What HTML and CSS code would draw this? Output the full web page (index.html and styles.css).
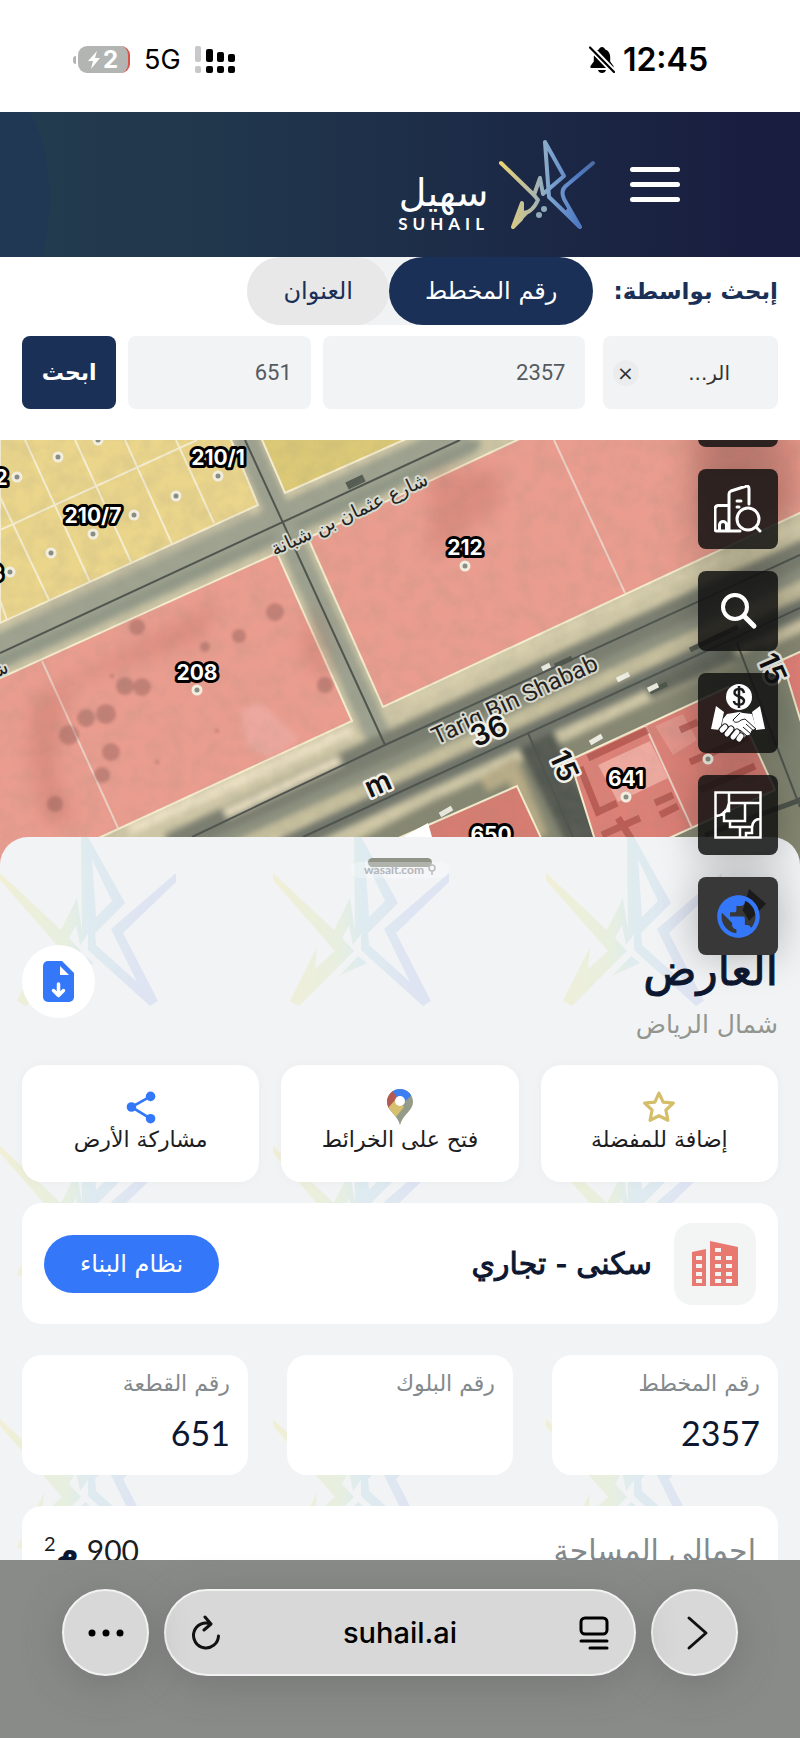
FILE: index.html
```html
<!DOCTYPE html>
<html lang="ar" dir="rtl">
<head>
<meta charset="utf-8">
<meta name="viewport" content="width=device-width, initial-scale=1">
<title>سهيل</title>
<link rel="stylesheet" href="styles.css">
</head>
<body>
<div class="status-bar">
  <div class="status-group">
    <span class="clock">12:45</span>
    <svg class="bell" viewBox="0 0 26 27" aria-hidden="true">
      <path d="M13 1c1.600 0 2.600 1 2.900 2.200 3.600 1.200 5.300 4.200 5.300 7.800v4.500l3.300 4.500v2H1.500v-2l3.300-4.500V11c0-3.600 1.700-6.600 5.300-7.800C10.400 2 11.400 1 13 1zM9 24h8c-.5 2-2 3-4 3s-3.500-1-4-3z" fill="#000"/>
      <path d="M1 1l24 25" stroke="#fff" stroke-width="6"/>
      <path d="M1 1.500l24 24.500" stroke="#000" stroke-width="2.200" stroke-linecap="round"/>
    </svg>
  </div>
  <div class="status-group status-left">
    <svg class="signal" viewBox="0 0 40 28" aria-hidden="true">
      <g fill="#c8c8cb"><rect x="0" y="0" width="6" height="16" rx="2"/><rect x="0" y="20" width="6" height="7" rx="2"/></g>
      <rect x="11" y="3" width="7" height="13" rx="2"/><rect x="22" y="6" width="7" height="10" rx="2"/><rect x="33" y="8" width="7" height="8" rx="2"/>
      <rect x="11" y="20" width="7" height="7" rx="2"/><rect x="22" y="20" width="7" height="7" rx="2"/><rect x="33" y="20" width="7" height="7" rx="2"/>
    </svg>
    <span class="network">5G</span>
    <span class="battery" dir="ltr">
      <svg viewBox="0 0 12 18" aria-hidden="true"><path d="M9 0L0 10h5L3 18l9-11H7z" fill="#fff"/></svg>2
    </span>
  </div>
</div>

<header class="site-header">
  <button class="menu-button" type="button" aria-label="القائمة"><span></span><span></span><span></span></button>
  <a class="brand" href="#">
    <svg class="brand-star" viewBox="0 0 98 96" aria-hidden="true">
      <defs><linearGradient id="logo" gradientUnits="userSpaceOnUse" x1="0" y1="50" x2="98" y2="50"><stop offset="0" stop-color="#f0d670"/><stop offset=".35" stop-color="#b4b9a6"/><stop offset=".52" stop-color="#7fa6d0"/><stop offset=".82" stop-color="#4f7ac4"/><stop offset="1" stop-color="#4b6a9a"/></linearGradient></defs>
      <g fill="none" stroke="url(#logo)" stroke-width="4" stroke-linecap="round" stroke-linejoin="round">
        <path d="M3 26L36 58 42 41 45 57 66 39 47 5 51 60 82 90 66 62Q62 53 69 48L95 26"/>
        <path d="M36 58L40 63Q34 76 25 76L23 82 15 90 24 66 24 76"/>
      </g>
      <path d="M71 69l13 21-4 1-14-15zM24 74l8 1-16 16-2-2z" fill="url(#logo)"/>
      <circle cx="41" cy="78" r="3" fill="#8faab8"/><circle cx="46" cy="72" r="3" fill="#8faab8"/>
    </svg>
    <span class="wordmark"><span class="wordmark-ar">سهيل</span><span class="wordmark-en" dir="ltr">SUHAIL</span></span>
  </a>
</header>

<form class="search-panel">
  <div class="search-mode">
    <span class="mode-label">إبحث بواسطة:</span>
    <div class="mode-switch">
      <button type="button" class="mode mode-on">رقم المخطط</button>
      <button type="button" class="mode">العنوان</button>
    </div>
  </div>
  <div class="search-fields">
    <div class="city">
      <span>الر...</span>
      <button type="button" class="clear" aria-label="مسح">×</button>
    </div>
    <input class="field" type="text" value="2357" aria-label="رقم المخطط">
    <input class="field" type="text" value="651" aria-label="رقم القطعة">
    <button class="submit" type="button">ابحث</button>
  </div>
</form>

<main class="stage">
  <svg class="map" viewBox="0 0 800 440" preserveAspectRatio="xMidYMin slice" direction="ltr" role="img" aria-label="خريطة الأراضي">
    <defs>
      <filter id="grain" x="0" y="0" width="100%" height="100%"><feTurbulence type="fractalNoise" baseFrequency=".06" numOctaves="4" seed="8"/><feColorMatrix values="0 0 0 0 .25  0 0 0 0 .25  0 0 0 0 .2  .9 0 0 0 -.3"/></filter>
      <filter id="soft"><feGaussianBlur stdDeviation="3"/></filter>
      <filter id="edge"><feGaussianBlur stdDeviation="1.500"/></filter>
      <filter id="wide"><feGaussianBlur stdDeviation="9"/></filter>
    </defs>
    <rect width="800" height="440" fill="#cfc7a6"/>
    <g fill="none">
      <g filter="url(#soft)">
        <path d="M-10 216L470-4" stroke="#9fa390" stroke-width="36"/>
        <path d="M-10 226L480 2" stroke="#8f9685" stroke-width="8"/>
        <path d="M243-6L382 305" stroke="#9da18f" stroke-width="25"/>
        <path d="M170 407L385 307 810 111" stroke="#7a7e70" stroke-width="27"/>
        <path d="M180 419L400 320 810 130" stroke="#8d917f" stroke-width="12"/>
        <path d="M190 428L400 334 810 146" stroke="#c6bf9d" stroke-width="11"/>
        <path d="M283 407L400 352 810 164" stroke="#70756a" stroke-width="19"/>
        <path d="M320 420L430 362 535 315 810 188 810 440z" fill="#858772"/>
        <path d="M536 300L590 410" stroke="#535951" stroke-width="38"/>
        <path d="M748 210L830 400" stroke="#7f8471" stroke-width="32"/>
        <path d="M484 345L512 329 540 397" stroke="#b8ac87" stroke-width="16"/>
        <path d="M648 252L735 213" stroke="#666b5f" stroke-width="15"/>
        <path d="M130 390L352 290" stroke="#ebe0c2" stroke-width="11"/>
        <path d="M225 374L340 320" stroke="#ebe0c2" stroke-width="9"/>
        <path d="M30 176L250 73" stroke="#bbb79e" stroke-width="7"/>
        <path d="M410 258L800 84" stroke="#d8d0ae" stroke-width="9"/>
      </g>
      <path d="M690 210L738 187M555 226L572 218M650 252l17-8M705 395L800 360" stroke="#4e554b" stroke-width="5"/>
      <path d="M347 46l17-8" stroke="#555c52" stroke-width="8"/>
      <g stroke="#eeeee5" stroke-width="5"><path d="M617 240l12-6M648 250l10-5M440 375l12-7M590 303l12-7M542 229l8-4"/></g>
    </g>
    <g stroke="#f5edcf" stroke-width="2">
      <path fill="#ead58b" d="M0-5H229L258 65 0 183z"/><path fill="#dcc977" d="M260-5L285 53 415-5z"/>
      <g fill="#ea9d8f"><path d="M-4 240L277 113 352 281 90 402-4 445z"/><path d="M308 98L528-5H804V71L383 267z"/></g>
      <path fill="#dd8177" d="M570 320L728 247 775 350 665 400H595z"/>
      <path fill="#e27f77" d="M782 220L804 210V292z"/><path fill="#d77d72" d="M385 404L517 346 542 400z"/>
      <g fill="none"><path d="M0 90L197 0M25 0L90 142M75 0L131 122M125 0L172 104M176 0L214 83M0 57L49 160M0 160L7 180"/><path stroke="#eed0c4" d="M42 221L118 388M554 0L625 153M645 285L692 388"/></g>
    </g>
    <g fill="#b46259" opacity=".28">
      <g filter="url(#wide)"><path d="M32 260L220 160 200 200 70 245 55 330 75 380 45 385 28 310z"/><path d="M315 160Q330 205 332 240L318 235 300 210z"/><path d="M430 30h70v35l-70 55zM690 0h110v60l-90 40z"/></g>
    </g>
    <g fill="#7b4c48" opacity=".35" filter="url(#edge)">
      <circle cx="137" cy="187" r="8"/><circle cx="125" cy="246" r="9"/><circle cx="142" cy="247" r="9"/><circle cx="106" cy="274" r="10"/><circle cx="86" cy="278" r="9"/><circle cx="69" cy="295" r="10"/><circle cx="111" cy="312" r="9"/><circle cx="102" cy="335" r="8"/><circle cx="275" cy="172" r="9"/><circle cx="239" cy="196" r="7"/><circle cx="205" cy="207" r="5"/><circle cx="55" cy="364" r="8"/><circle cx="325" cy="245" r="8"/><circle cx="157" cy="322" r="2"/><circle cx="217" cy="291" r="2"/><circle cx="112" cy="236" r="2"/>
    </g>
    <path d="M240 270l20-8 40 38-32 18-22-12z" fill="#eeb2ae" opacity=".5" filter="url(#soft)"/>
    <g fill="#efaaa0"><path d="M598 325l52-24 18 37-50 24z"/><path d="M655 286l28-12 14 26-24 15z" opacity=".5"/></g>
    <g fill="none" stroke="#a84a44" opacity=".65" stroke-width="7"><path d="M580 327L598 372 617 363M588 318L648 290M602 395l38-17M618 378l14 22M660 375l18-9M655 363l18-8"/><path d="M690 322l58-25M680 290l18-8M700 350l55-24"/></g>
    <rect width="800" height="440" filter="url(#grain)" opacity=".28"/>
    <g fill="none" stroke="#50554f" stroke-width="2"><path d="M0 213L460 0M245 0L385 305M192 397L385 305 800 115M303 397L400 352 800 168M528 293L573 397M737 203L800 367M775 370l25-12"/></g>
    <path d="M403 397l25-14 4 14z" fill="#fff"/>
    <g fill="#8a8d84" stroke="#f2eedf" stroke-width="3">
      <circle cx="98" cy="0" r="4"/><circle cx="58" cy="17" r="4"/><circle cx="17" cy="37" r="4"/><circle cx="218" cy="36" r="4"/><circle cx="176" cy="56" r="4"/><circle cx="134" cy="75" r="4"/><circle cx="93" cy="94" r="4"/><circle cx="51" cy="113" r="4"/><circle cx="10" cy="132" r="4"/><circle cx="197" cy="250" r="4"/><circle cx="465" cy="126" r="4"/><circle cx="626" cy="357" r="4"/><circle cx="708" cy="319" r="4"/>
    </g>
    <g class="plot-label"><text x="218" y="25">210/1</text><text x="93" y="83">210/7</text><text x="1" y="45">2</text><text x="-4" y="141">3</text><text x="197" y="240">208</text><text x="465" y="115">212</text><text x="626" y="346">641</text><text x="491" y="402">650</text></g>
    <g class="street-label"><text transform="translate(518 267) rotate(-25)">Tariq Bin Shabab</text><text class="street-ar" transform="translate(352 80) rotate(-25)">شارع عثمان بن شبانة</text><text class="street-ar" transform="translate(0 236) rotate(-25)">شـ</text></g>
    <g class="width-label"><text transform="translate(382 353) rotate(-24)">m</text><text transform="translate(493 300) rotate(-24)">36</text><text transform="translate(555 330) rotate(66)">15</text><text transform="translate(763 233) rotate(66)">15</text></g>
  </svg>

  <section class="sheet">
    <svg class="sheet-pattern" aria-hidden="true">
      <defs>
        <linearGradient id="mark"><stop offset="0" stop-color="#f1efd6"/><stop offset=".38" stop-color="#e7efe0"/><stop offset=".5" stop-color="#deebf0"/><stop offset=".62" stop-color="#dee9f0"/><stop offset=".78" stop-color="#dfe4f2"/></linearGradient>
        <pattern id="stars" width="273" height="273" patternUnits="userSpaceOnUse">
          <path fill="url(#mark)" fill-rule="evenodd" d="M0 36L61 93 77 61 82 94 81 0H88L125 66 95 96 96 108 137 145 111 92 176 36V45L123 96 158 164 150 169 88 113V97L80 108 76 88 69 101 81 114 26 169 17 164 44 110 42 132 62 114 0 43zM92 22L96 80 112 64zM85 119L94 126 66 139z"/>
        </pattern>
      </defs>
      <rect width="100%" height="100%" fill="url(#stars)"/>
    </svg>
    <div class="grabber"></div>
    <div class="source"><svg viewBox="0 0 8 12" aria-hidden="true"><path d="M4 7v4M4 1a3 3 0 1 1 0 6 3 3 0 0 1 0-6z" fill="none" stroke="#b9bbbd" stroke-width="1.500"/></svg><span dir="ltr">wasalt.com</span></div>

    <div class="place">
      <div class="place-name">
        <h1>العارض</h1>
        <p>شمال الرياض</p>
      </div>
      <button class="download" type="button" aria-label="تنزيل">
        <svg viewBox="0 0 31 41" aria-hidden="true"><path d="M5 0h14l12 12v24a5 5 0 0 1-5 5H5a5 5 0 0 1-5-5V5a5 5 0 0 1 5-5z" fill="#3478f9"/><path d="M17 5v9h9z" fill="#fff"/><path d="M15.500 23v11M10.500 29.500l5 5 5-5" fill="none" stroke="#fff" stroke-width="3.500" stroke-linecap="round" stroke-linejoin="round"/></svg>
      </button>
    </div>

    <div class="actions">
      <button type="button" class="action">
        <svg viewBox="0 0 32 32" aria-hidden="true"><path d="M16 3l3.900 8.400 9.600 1-7 6.400 1.900 9.700L16 24.200l-8.400 4.300 1.900-9.700-7-6.400 9.600-1z" fill="none" stroke="#d4be69" stroke-width="3" stroke-linejoin="round"/></svg>
        إضافة للمفضلة
      </button>
      <button type="button" class="action">
        <svg viewBox="0 0 26 36" class="pin" aria-hidden="true">
          <defs><clipPath id="drop"><path d="M13 0c7.200 0 13 5.700 13 13 0 9-10 12-13 23C10 25 0 22 0 13 0 5.700 5.800 0 13 0z"/></clipPath></defs>
          <g clip-path="url(#drop)"><path d="M0 0h26v36H0z" fill="#949b88"/><path d="M3 0h23v5L13 17z" fill="#3b7ff0"/><path d="M0 0h4l9 12-11 9H0z" fill="#b45a52"/><path d="M1 19L9 10l8 8-9 11z" fill="#d6c070"/></g><circle cx="13" cy="12" r="5" fill="#fff"/>
        </svg>
        فتح على الخرائط
      </button>
      <button type="button" class="action">
        <svg viewBox="0 0 32 32" aria-hidden="true"><path d="M25 6L7 16l18 11" fill="none" stroke="#3478f9" stroke-width="2.500"/><circle cx="25" cy="6" r="4.500" fill="#3478f9"/><circle cx="7" cy="16" r="4.500" fill="#3478f9"/><circle cx="25" cy="27" r="4.500" fill="#3478f9"/></svg>
        مشاركة الأرض
      </button>
    </div>

    <div class="card usage">
      <span class="usage-icon"><svg viewBox="0 0 46 45" aria-hidden="true"><path d="M0 11l14-3v37H0zM18 0l28 6v39H18z" fill="#e87970"/><path fill="#f3f5f5" d="M4 15h6v4H4zM4 23h6v4H4zM4 31h6v4H4zM4 38h6v4H4zM23 7h6v4h-6zM23 15h6v4h-6zM23 23h6v4h-6zM23 31h6v4h-6zM23 38h6v4h-6zM34 15h6v4h-6zM34 23h6v4h-6zM34 31h6v4h-6zM34 38h6v4h-6z"/></svg></span>
      <h2>سكنى - تجاري</h2>
      <button type="button" class="rules">نظام البناء</button>
    </div>

    <dl class="facts">
      <div class="fact"><dt>رقم المخطط</dt><dd>2357</dd></div>
      <div class="fact"><dt>رقم البلوك</dt><dd></dd></div>
      <div class="fact"><dt>رقم القطعة</dt><dd>651</dd></div>
    </dl>

    <div class="card area"><span class="area-label">اجمالي المساحة</span><span class="area-value">900 <b>م</b><sup>2</sup></span></div>
  </section>

  <nav class="tools" aria-label="أدوات الخريطة">
    <button type="button" class="tool" aria-label="الطبقات"></button>
    <button type="button" class="tool" aria-label="بحث المباني"><svg viewBox="0 0 48 48" aria-hidden="true"><g fill="none" stroke="#fff" stroke-width="3" stroke-linecap="round" stroke-linejoin="round"><path d="M26 46H3Q1 46 1 44V24Q1 21 4 20.500H15M15 46V9Q15 7 17 6L31 1.500Q35 0 35 4V19M5.500 45V40a3.500 3.500 0 0 1 7 0v5M23 16h4M23 22h2"/><circle cx="34" cy="34" r="11"/><path d="M42 42l4 4"/></g></svg></button>
    <button type="button" class="tool" aria-label="بحث"><svg viewBox="0 0 48 48" aria-hidden="true"><circle cx="21" cy="20" r="12" fill="none" stroke="#fff" stroke-width="4"/><path d="M30 29l10 10" stroke="#fff" stroke-width="5" stroke-linecap="round"/></svg></button>
    <button type="button" class="tool" aria-label="الصفقات"><svg class="deal" viewBox="0 0 54 60" aria-hidden="true">
      <circle cx="28" cy="14" r="13" fill="#fff"/>
      <path d="M33 10c-1-6-10-5-9.500 0 .5 4.500 10 3 9.500 8-.5 5-10 5-10 0M28 3v22" fill="none" stroke="#1c1b1b" stroke-width="2.500"/>
      <g fill="#fff"><path d="M5 23l8 6-4 18-9-1zM49 23l-8 6 4 18 9-1z"/><path d="M16 31l12-2 4 1 9 1 4 14-5 3c0 4-3 5-5 4-1 3-4 4-6 2-2 3-5 3-7 1l-8-6-4-3 2-10z"/></g>
      <path d="M11 47l3-3M16 51l4-5M22 54l4-5M28 56l2-3" stroke="#1c1b1b" stroke-width="7" stroke-linecap="round"/>
      <path d="M11 47l3-3M16 51l4-5M22 54l4-5M28 56l2-3" stroke="#fff" stroke-width="5" stroke-linecap="round"/>
      <path d="M29 30l-7 7c1 3 5 3 8 0l4-1 11 10M32 44l8 7M29 47l7 6M35 41l9 8" fill="none" stroke="#1c1b1b" stroke-width="1"/>
    </svg></button>
    <button type="button" class="tool" aria-label="المخططات"><svg viewBox="0 0 48 48" aria-hidden="true"><path fill="none" stroke="#fff" stroke-width="2.500" d="M1.500 1.500h45v45h-45zM15 2v10q-2 12-13 13M15 12h31M31 13v17H10V20M15 13v7h-5M10 30h6v6h10v10M26 36h12M46 28q-7 0-8 8v6h-6v4"/></svg></button>
    <button type="button" class="tool" aria-label="الخريطة الأساسية"><svg class="globe" viewBox="0 0 24 24" aria-hidden="true"><path d="M17-1l8 7-8 8-3-5z" fill="#1b1b1b"/><path fill="#3478f9" d="M12 2C6.480 2 2 6.480 2 12s4.480 10 10 10 10-4.480 10-10S17.520 2 12 2zm-1 17.930c-3.950-.49-7-3.850-7-7.930 0-.62.08-1.210.21-1.790L9 15v1c0 1.100.9 2 2 2v1.930zm6.900-2.540c-.26-.81-1-1.390-1.900-1.390h-1v-3c0-.55-.45-1-1-1H8v-2h2c.55 0 1-.45 1-1V7h2c1.100 0 2-.9 2-2v-.41c2.930 1.190 5 4.060 5 7.410 0 2.080-.8 3.970-2.100 5.390z"/></svg></button>
  </nav>
</main>

<footer class="browser-bar">
  <button type="button" class="round" aria-label="التالي"><svg viewBox="0 0 36 36" aria-hidden="true"><path d="M12 3l17 15-17 15" fill="none" stroke="#111" stroke-width="3" stroke-linecap="round" stroke-linejoin="round"/></svg></button>
  <div class="address">
    <svg viewBox="0 0 32 36" aria-hidden="true"><g fill="none" stroke="#000" stroke-width="3" stroke-linecap="round"><rect x="3" y="3" width="26" height="16" rx="4"/><path d="M3 26h26M12 33h17"/></g></svg>
    <span dir="ltr">suhail.ai</span>
    <button type="button" class="reload" aria-label="إعادة التحميل"><svg viewBox="0 0 32 36" aria-hidden="true"><path d="M21 9A12.500 12.500 0 1 0 28.500 21M15 2l6 7-7 6" fill="none" stroke="#111" stroke-width="3" stroke-linecap="round" stroke-linejoin="round"/></svg></button>
  </div>
  <button type="button" class="round" aria-label="المزيد"><svg viewBox="0 0 36 36" aria-hidden="true"><circle cx="4" cy="18" r="3.500"/><circle cx="18" cy="18" r="3.500"/><circle cx="32" cy="18" r="3.500"/></svg></button>
</footer>
</body>
</html>
```
FILE: styles.css
```css
*, *::before, *::after { box-sizing: border-box; }

body {
  margin: 0;
  height: 100vh;
  display: flex;
  flex-direction: column;
  background: #fff;
  color: #1d1d1f;
  font-family: "DejaVu Sans", sans-serif;
}

button { border: 0; padding: 0; background: none; color: inherit; font: inherit; }
svg { display: block; }

.status-bar {
  display: flex;
  justify-content: space-between;
  align-items: center;
  flex: none;
  height: 112px;
  padding: 7px 92px 0 74px;
  color: #000;
  font-family: Inter, sans-serif;
}
.status-group { display: flex; align-items: center; gap: 8px; }
.status-left { gap: 14px; }
.clock { font-size: 32px; font-weight: 600; }
.bell { width: 26px; height: 27px; }
.signal { width: 40px; height: 28px; }
.network { font-size: 27px; }
.battery {
  position: relative;
  display: flex;
  align-items: center;
  justify-content: center;
  gap: 3px;
  width: 52px;
  height: 27px;
  margin-left: 4px;
  border-radius: 9px;
  border-right: 2px solid #d9534a;
  background: #b2b5b1;
  color: #fff;
  font-size: 24px;
  font-weight: 700;
}
.battery::before {
  content: "";
  position: absolute;
  left: -5px;
  width: 3px;
  height: 8px;
  border-radius: 3px 0 0 3px;
  background: #b2b5b1;
}
.battery svg { width: 12px; height: 18px; }

.site-header {
  display: flex;
  align-items: center;
  flex: none;
  gap: 34px;
  height: 145px;
  padding-right: 120px;
  background:
    radial-gradient(ellipse 50px 110px at 0 60%, #203853 98%, transparent 100%),
    linear-gradient(90deg, #233c4e, #20364c 30%, #1c2b47 60%, #191d3f 95%);
}
.menu-button { display: grid; gap: 10px; width: 50px; }
.menu-button span { height: 5px; border-radius: 3px; background: #fff; }
.brand { display: flex; align-items: flex-end; gap: 9px; color: #fff; text-decoration: none; }
.brand-star { width: 98px; height: 96px; }
.wordmark { display: grid; justify-items: center; }
.wordmark-ar { font-size: 38px; line-height: 44px; }
.wordmark-en { font: 700 17px/18px Lato, sans-serif; letter-spacing: 5px; }

.search-panel {
  display: grid;
  grid-template-columns: minmax(0, 1fr);
  flex: none;
  gap: 11px;
  height: 183px;
  align-content: start;
  padding: 0 22px;
  color: #1a3057;
}
.search-mode { display: flex; align-items: center; gap: 20px; height: 68px; }
.mode-label { font-size: 23px; font-weight: 700; white-space: nowrap; }
.mode-switch { display: flex; height: 68px; border-radius: 34px; background: #f1f2f4; }
.mode { padding: 0 36px; border-radius: 34px; background: #e8e8e8; font-size: 24px; }
.mode-on { background: #1a3057; color: #fff; }
.search-fields {
  display: grid;
  grid-template-columns: minmax(0, 181fr) minmax(0, 261fr) minmax(0, 182fr) minmax(0, 94fr);
  gap: 12px;
  height: 73px;
}
.city {
  display: flex;
  align-items: center;
  justify-content: space-between;
  margin-left: 6px;
  padding: 0 48px 0 10px;
  border-radius: 8px;
  background: #f1f3f5;
  color: #333;
  font-size: 20px;
}
.clear { width: 26px; height: 26px; border-radius: 13px; background: #ebecee; line-height: 26px; }
.field {
  min-width: 0;
  border: 0;
  border-radius: 8px;
  padding: 0 19px;
  background: #f1f3f5;
  color: #555a5e;
  font-family: Roboto, sans-serif;
  font-size: 22px;
}
.submit { border-radius: 8px; background: #1a3057; color: #fff; font-size: 22px; font-weight: 700; }

.stage { position: relative; flex: 1; min-height: 0; overflow: hidden; }
.map { width: 100%; height: 440px; }
.map text { text-anchor: middle; paint-order: stroke; stroke-linejoin: round; }
.plot-label { fill: #fff; stroke: #000; stroke-width: 6px; font: 700 21px Inter, sans-serif; }
.street-label { fill: #222; stroke: #d8d8cc; stroke-width: 4px; font: 24px Roboto, sans-serif; }
.street-ar { direction: rtl; font: 19px "DejaVu Sans", sans-serif; }
.width-label { fill: #111; stroke: #f1f1ea; stroke-width: 5px; font: 600 29px Inter, sans-serif; }

.sheet {
  position: relative;
  margin-top: -43px;
  padding: 21px 22px 0;
  min-height: 760px;
  border-radius: 28px 28px 0 0;
  overflow: hidden;
  background: #f1f3f5;
}
.sheet > * { position: relative; }
.sheet > .sheet-pattern { position: absolute; inset: 0; width: 100%; height: 100%; }
.grabber { width: 64px; height: 9px; margin: 0 auto; border-radius: 5px; background: #8f9388; }
.source {
  display: flex;
  align-items: center;
  justify-content: center;
  gap: 4px;
  width: 98px;
  height: 16px;
  margin: -5px auto 0;
  border-radius: 8px;
  background: rgb(255 255 255 / 30%);
  color: #b3b5b8;
  font: 700 12px/16px Lato, sans-serif;
}
.source svg { width: 8px; height: 12px; }

.place { display: flex; justify-content: space-between; align-items: center; height: 168px; margin-top: 19px; }
.place-name { padding-top: 24px; }
.place h1 { margin: 0; color: #0d1730; font-size: 44px; line-height: 58px; font-weight: 400; -webkit-text-stroke: 1px #0d1730; }
.place p { margin: 6px 0 0; color: #92958e; font-size: 25px; line-height: 40px; }
.download { display: grid; place-items: center; width: 73px; height: 73px; border-radius: 50%; background: #fff; }
.download svg { width: 31px; height: 41px; }

.actions { display: grid; grid-template-columns: repeat(3, 1fr); gap: 22px; }
.action {
  display: grid;
  justify-items: center;
  align-content: center;
  height: 117px;
  padding-bottom: 4px;
  border-radius: 20px;
  background: #fff;
  box-shadow: 0 0 12px rgb(0 0 0 / 3%);
  font-size: 22px;
  line-height: 30px;
}
.action svg { width: 34px; height: 36px; }
.action .pin { width: 26px; }

.card { display: flex; align-items: center; border-radius: 20px; background: #fff; }
.usage { gap: 22px; height: 121px; margin-top: 21px; padding: 0 22px; }
.usage-icon { display: grid; place-items: center; width: 82px; height: 82px; border-radius: 18px; background: #f3f5f5; }
.usage-icon svg { width: 46px; height: 45px; }
.usage h2 { flex: 1; margin: 0; color: #0d1730; font-size: 30px; font-weight: 400; -webkit-text-stroke: 1px #0d1730; }
.rules { width: 175px; height: 58px; border-radius: 29px; background: #3478f9; color: #fff; font-size: 24px; }

.facts { display: grid; grid-template-columns: repeat(3, 1fr); gap: 39px; margin: 31px 0; }
.fact { height: 120px; padding: 14px 18px; border-radius: 20px; background: #fff; }
.fact dt { color: #83898c; font-size: 22px; line-height: 30px; }
.fact dd { margin: 14px 0 0; color: #0d1730; font: 34px/40px Lato, sans-serif; }

.area { justify-content: space-between; height: 88px; padding: 0 22px; }
.area-label { color: #83898c; font-size: 30px; }
.area-value { font-family: Lato, "DejaVu Sans", sans-serif; font-size: 30px; line-height: 40px; }
.area-value b { color: #0d1730; font-size: 32px; }
.area-value sup { font-size: 20px; line-height: 20px; }

.tools { position: absolute; top: -73px; right: 22px; display: grid; gap: 22px; }
.tool {
  display: grid;
  place-items: center;
  width: 80px;
  height: 80px;
  border-radius: 8px;
  background: rgb(15 15 15 / 85%);
  box-shadow: 0 0 40px rgb(0 0 0 / 28%);
}
.tool:last-child { height: 78px; background: #383838; }
.tool svg { width: 48px; height: 48px; }
.tool .deal { width: 54px; height: 60px; }
.tool .globe { width: 51px; height: 51px; overflow: visible; }

.browser-bar {
  position: relative;
  display: flex;
  flex: none;
  gap: 15px;
  height: 178px;
  padding: 29px 62px 0;
  background: #898b89;
}
.round, .address {
  display: flex;
  align-items: center;
  justify-content: center;
  height: 87px;
  border: 2px solid #f2f2f2;
  border-radius: 44px;
  background: #d8d8d8;
  box-shadow: 0 8px 40px rgb(90 90 90 / 40%);
  color: #000;
}
.round { width: 87px; }
.round svg { width: 36px; height: 36px; }
.address { flex: 1; justify-content: space-between; padding: 0 24px; font: 500 29px Inter, sans-serif; }
.address svg { width: 32px; height: 36px; }
```
